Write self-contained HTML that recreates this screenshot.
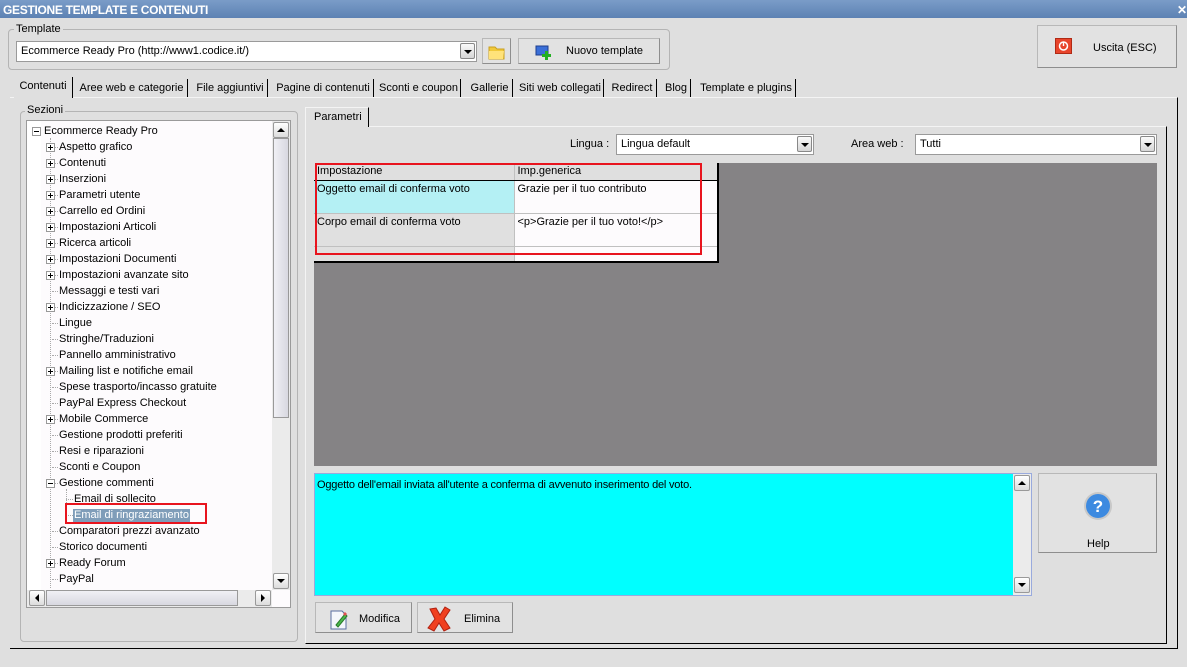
<!DOCTYPE html>
<html><head><meta charset="utf-8">
<style>
*{box-sizing:border-box;margin:0;padding:0}
body{width:1187px;height:667px;background:#dfdfdf;font-family:"Liberation Sans",sans-serif;font-size:11px;color:#000;position:relative;overflow:hidden}
.a{position:absolute}
.title{left:0;top:0;width:1187px;height:18px;background:linear-gradient(#7a9cc8,#5d82b3);color:#fff;font-weight:bold;font-size:12px;padding:3px 0 0 3px;letter-spacing:-0.3px}
.grp{border:1px solid #b4b4b4;border-radius:4px}
.lbl{background:#dfdfdf;padding:0 2px}
.combo{background:#fff;border:1px solid #9a9a9a;padding:3px 4px;white-space:nowrap}
.dd{position:absolute;right:1px;top:1px;width:15px;height:16px;border:1px solid #888;border-radius:2px;background:linear-gradient(#fafafa,#d6d6d6)}
.dd:after{content:"";position:absolute;left:3px;top:6px;border-left:4px solid transparent;border-right:4px solid transparent;border-top:4px solid #000}
.btn{border:1px solid #b8b8b8;border-right-color:#8e8e8e;border-bottom-color:#8e8e8e;background:#e2e2e2}
.tab{top:79px;height:18px;padding-top:3px;border-right:1px solid #000;text-align:center;white-space:nowrap}
.tree div{position:absolute;white-space:nowrap;height:16px}
.tree .pb{width:9px;height:9px;border:1px solid #999;background:#fff}
.tree .pb:before{content:"";position:absolute;left:1px;top:3px;width:5px;height:1px;background:#000}
.tree .pp:after{content:"";position:absolute;left:3px;top:1px;width:1px;height:5px;background:#000}
.sb{background:#ebebeb}
.arr{position:absolute;width:16px;height:16px;border:1px solid #999;border-radius:2px;background:linear-gradient(#fff,#dcdcdc)}
td{border-right:1px solid #c0c0c0;border-bottom:1px solid #c0c0c0;vertical-align:top;padding:2px 3px}
</style></head><body>
<div class="a title">GESTIONE TEMPLATE E CONTENUTI</div>
<div class="a" style="left:1177px;top:3px;color:#fff;font-weight:bold;font-size:12px">✕</div>

<div class="a grp" style="left:8px;top:29px;width:662px;height:41px"></div>
<div class="a lbl" style="left:14px;top:23px">Template</div>
<div class="a combo" style="left:16px;top:41px;width:461px;height:21px">Ecommerce Ready Pro (http://www1.codice.it/)<span class="dd"></span></div>
<div class="a btn" style="left:482px;top:38px;width:29px;height:26px"><svg width="27" height="24"><path d="M6 8h6l2 2h7v10H6z" fill="#f1c93a" stroke="#c9a020"/><path d="M6 12h15l-1 8H6z" fill="#ffe27a"/></svg></div>
<div class="a btn" style="left:518px;top:38px;width:142px;height:26px"><svg class="a" style="left:15px;top:4px" width="22" height="18"><rect x="2" y="3" width="12" height="9" fill="#3a6fd8" stroke="#1d3f8e"/><rect x="11" y="8" width="3" height="9" fill="#22b022"/><rect x="8" y="11" width="9" height="3" fill="#22b022"/></svg><span class="a" style="left:47px;top:6px">Nuovo template</span></div>
<div class="a btn" style="left:1037px;top:25px;width:140px;height:43px"><svg class="a" style="left:17px;top:12px" width="17" height="16"><rect x="0.5" y="0.5" width="16" height="15" fill="#e8452c" stroke="#b02a15"/><circle cx="8.5" cy="8" r="4" fill="none" stroke="#fff" stroke-width="1.5"/><rect x="7.8" y="4" width="1.4" height="4" fill="#fff"/></svg><span class="a" style="left:55px;top:16px">Uscita (ESC)</span></div>

<div class="a" style="left:10px;top:97px;width:1168px;height:552px;border-right:1px solid #000;border-bottom:1px solid #000;border-top:1px solid #f4f4f4"></div>
<div class="a tab" style="left:14px;width:59px;top:77px;height:21px;background:#dfdfdf">Contenuti</div>
<div class="a tab" style="left:76px;width:112px">Aree web e categorie</div>
<div class="a tab" style="left:193px;width:75px">File aggiuntivi</div>
<div class="a tab" style="left:273px;width:101px">Pagine di contenuti</div>
<div class="a tab" style="left:377px;width:84px">Sconti e coupon</div>
<div class="a tab" style="left:467px;width:46px">Gallerie</div>
<div class="a tab" style="left:517px;width:87px">Siti web collegati</div>
<div class="a tab" style="left:608px;width:49px">Redirect</div>
<div class="a tab" style="left:662px;width:29px">Blog</div>
<div class="a tab" style="left:697px;width:99px">Template e plugins</div>

<div class="a grp" style="left:20px;top:111px;width:278px;height:531px"></div>
<div class="a lbl" style="left:25px;top:104px">Sezioni</div>
<div class="a" style="left:26px;top:120px;width:265px;height:488px;background:#fdfbfd;border:1px solid #9a9a9a"></div>
<div class="a" style="left:27px;top:121px;width:14px;height:469px;background:#fff"></div>
<div class="a tree" style="left:0;top:0">
<div class="pb" style="left:32px;top:127px"></div><div style="left:44px;top:125px">Ecommerce Ready Pro</div>
<div style="left:50px;top:138px;width:1px;height:450px;border-left:1px dotted #aaa"></div>
</div>
<div class="a tree" id="t" style="left:0;top:0"></div>
<script>
var it=[["+","Aspetto grafico"],["+","Contenuti"],["+","Inserzioni"],["+","Parametri utente"],["+","Carrello ed Ordini"],["+","Impostazioni Articoli"],["+","Ricerca articoli"],["+","Impostazioni Documenti"],["+","Impostazioni avanzate sito"],["","Messaggi e testi vari"],["+","Indicizzazione / SEO"],["","Lingue"],["","Stringhe/Traduzioni"],["","Pannello amministrativo"],["+","Mailing list e notifiche email"],["","Spese trasporto/incasso gratuite"],["","PayPal Express Checkout"],["+","Mobile Commerce"],["","Gestione prodotti preferiti"],["","Resi e riparazioni"],["","Sconti e Coupon"],["-","Gestione commenti"],["c","Email di sollecito"],["s","Email di ringraziamento"],["","Comparatori prezzi avanzato"],["","Storico documenti"],["+","Ready Forum"],["","PayPal"]];
var h="";for(var i=0;i<it.length;i++){var y=141+i*16,k=it[i][0],t=it[i][1];
if(k=="c"||k=="s"){h+='<div style="left:66px;top:'+(y+6)+'px;width:7px;border-top:1px dotted #aaa;height:1px"></div>';
if(k=="s")h+='<div style="left:73px;top:'+y+'px;background:#7f9db9;color:#fff;padding:0 1px;height:14px">'+t+'</div>';else h+='<div style="left:74px;top:'+y+'px">'+t+'</div>';}
else{if(k=="+"||k=="-"){h+='<div style="left:55px;top:'+(y+6)+'px;width:3px;border-top:1px dotted #aaa;height:1px"></div><div class="pb'+(k=="+"?" pp":"")+'" style="left:46px;top:'+(y+2)+'px"></div>';}else h+='<div style="left:52px;top:'+(y+6)+'px;width:6px;border-top:1px dotted #aaa;height:1px"></div>';
h+='<div style="left:59px;top:'+y+'px">'+t+'</div>';}}
h+='<div style="left:66px;top:489px;width:1px;height:26px;border-left:1px dotted #aaa"></div>';
document.getElementById("t").innerHTML=h;
</script>
<div class="a" style="left:65px;top:503px;width:142px;height:21px;border:2px solid #e8141e"></div>
<div class="a sb" style="left:272px;top:121px;width:18px;height:469px"></div>
<div class="a arr" style="left:273px;top:122px"></div><div class="a" style="left:277px;top:128px;border-left:4px solid transparent;border-right:4px solid transparent;border-bottom:4px solid #000"></div>
<div class="a" style="left:273px;top:138px;width:16px;height:280px;border:1px solid #999;background:linear-gradient(90deg,#f0f0f5,#d8d8e0)"></div>
<div class="a arr" style="left:273px;top:573px"></div><div class="a" style="left:277px;top:579px;border-left:4px solid transparent;border-right:4px solid transparent;border-top:4px solid #000"></div>
<div class="a sb" style="left:27px;top:590px;width:245px;height:17px"></div>
<div class="a arr" style="left:29px;top:590px"></div><div class="a" style="left:35px;top:594px;border-top:4px solid transparent;border-bottom:4px solid transparent;border-right:4px solid #000"></div>
<div class="a" style="left:46px;top:590px;width:192px;height:16px;border:1px solid #999;background:linear-gradient(#f0f0f5,#d8d8e0)"></div>
<div class="a arr" style="left:255px;top:590px"></div><div class="a" style="left:261px;top:594px;border-top:4px solid transparent;border-bottom:4px solid transparent;border-left:4px solid #000"></div>

<div class="a" style="left:305px;top:126px;width:862px;height:518px;border-top:1px solid #f4f4f4;border-left:1px solid #f4f4f4;border-right:1px solid #000;border-bottom:1px solid #000"></div>
<div class="a" style="left:305px;top:107px;width:64px;height:20px;background:#dfdfdf;border-right:1px solid #000;border-top:1px solid #f4f4f4;border-left:1px solid #f4f4f4;padding:3px 0 0 8px">Parametri</div>
<div class="a" style="left:570px;top:138px">Lingua :</div>
<div class="a combo" style="left:616px;top:134px;width:198px;height:21px">Lingua default<span class="dd"></span></div>
<div class="a" style="left:851px;top:138px">Area web :</div>
<div class="a combo" style="left:915px;top:134px;width:242px;height:21px">Tutti<span class="dd"></span></div>

<div class="a" style="left:314px;top:163px;width:843px;height:303px;background:#858385"></div>
<table class="a" style="left:314px;top:163px;width:405px;border-collapse:collapse;background:#fdfbfd;border-right:2px solid #000;border-bottom:2px solid #000">
<tr style="height:17px;background:#dfdfdf"><td style="width:200px;border-bottom:1px solid #000;padding-top:2px">Impostazione</td><td style="border-bottom:1px solid #000">Imp.generica</td></tr>
<tr style="height:33px"><td style="background:#b4f0f4">Oggetto email di conferma voto</td><td>Grazie per il tuo contributo</td></tr>
<tr style="height:33px"><td style="background:#e0e0e0">Corpo email di conferma voto</td><td>&lt;p&gt;Grazie per il tuo voto!&lt;/p&gt;</td></tr>
<tr style="height:16px"><td style="background:#e0e0e0"></td><td></td></tr>
</table>
<div class="a" style="left:315px;top:163px;width:387px;height:92px;border:2px solid #e8141e"></div>

<div class="a" style="left:314px;top:473px;width:718px;height:123px;background:#00ffff;border:1px solid #9ad;padding:5px 2px;letter-spacing:-0.2px">Oggetto dell'email inviata all'utente a conferma di avvenuto inserimento del voto.</div>
<div class="a sb" style="left:1013px;top:474px;width:18px;height:121px"></div>
<div class="a arr" style="left:1014px;top:475px"></div><div class="a" style="left:1018px;top:481px;border-left:4px solid transparent;border-right:4px solid transparent;border-bottom:4px solid #000"></div>
<div class="a arr" style="left:1014px;top:577px"></div><div class="a" style="left:1018px;top:583px;border-left:4px solid transparent;border-right:4px solid transparent;border-top:4px solid #000"></div>

<div class="a btn" style="left:1038px;top:473px;width:119px;height:80px"><svg class="a" style="left:44px;top:17px" width="30" height="30"><circle cx="15" cy="15" r="14" fill="#c8c8c8"/><circle cx="15" cy="15" r="12" fill="#3d8ae0"/><text x="15" y="21" text-anchor="middle" font-family="Liberation Sans" font-weight="bold" font-size="17" fill="#fff">?</text></svg><span class="a" style="left:48px;top:64px">Help</span></div>

<div class="a btn" style="left:315px;top:602px;width:97px;height:31px"><svg class="a" style="left:12px;top:5px" width="22" height="22"><path d="M3 3h11l4 4v14H3z" fill="#f4f6fb" stroke="#5a6fa0"/><path d="M8 17l9-11 2 2-9 11z" fill="#4cb84c" stroke="#2a7a2a"/><path d="M15 6l2-2 2 2-2 2z" fill="#e05050"/></svg><span class="a" style="left:43px;top:10px">Modifica</span></div>
<div class="a btn" style="left:417px;top:602px;width:96px;height:31px"><svg class="a" style="left:9px;top:3px" width="26" height="26"><path d="M3 3l6-1 4 7 5-8 5 3-6 9 6 9-6 3-5-8-5 8-6-3 7-9z" fill="#f04020" stroke="#b02010"/></svg><span class="a" style="left:46px;top:10px">Elimina</span></div>
</body></html>
